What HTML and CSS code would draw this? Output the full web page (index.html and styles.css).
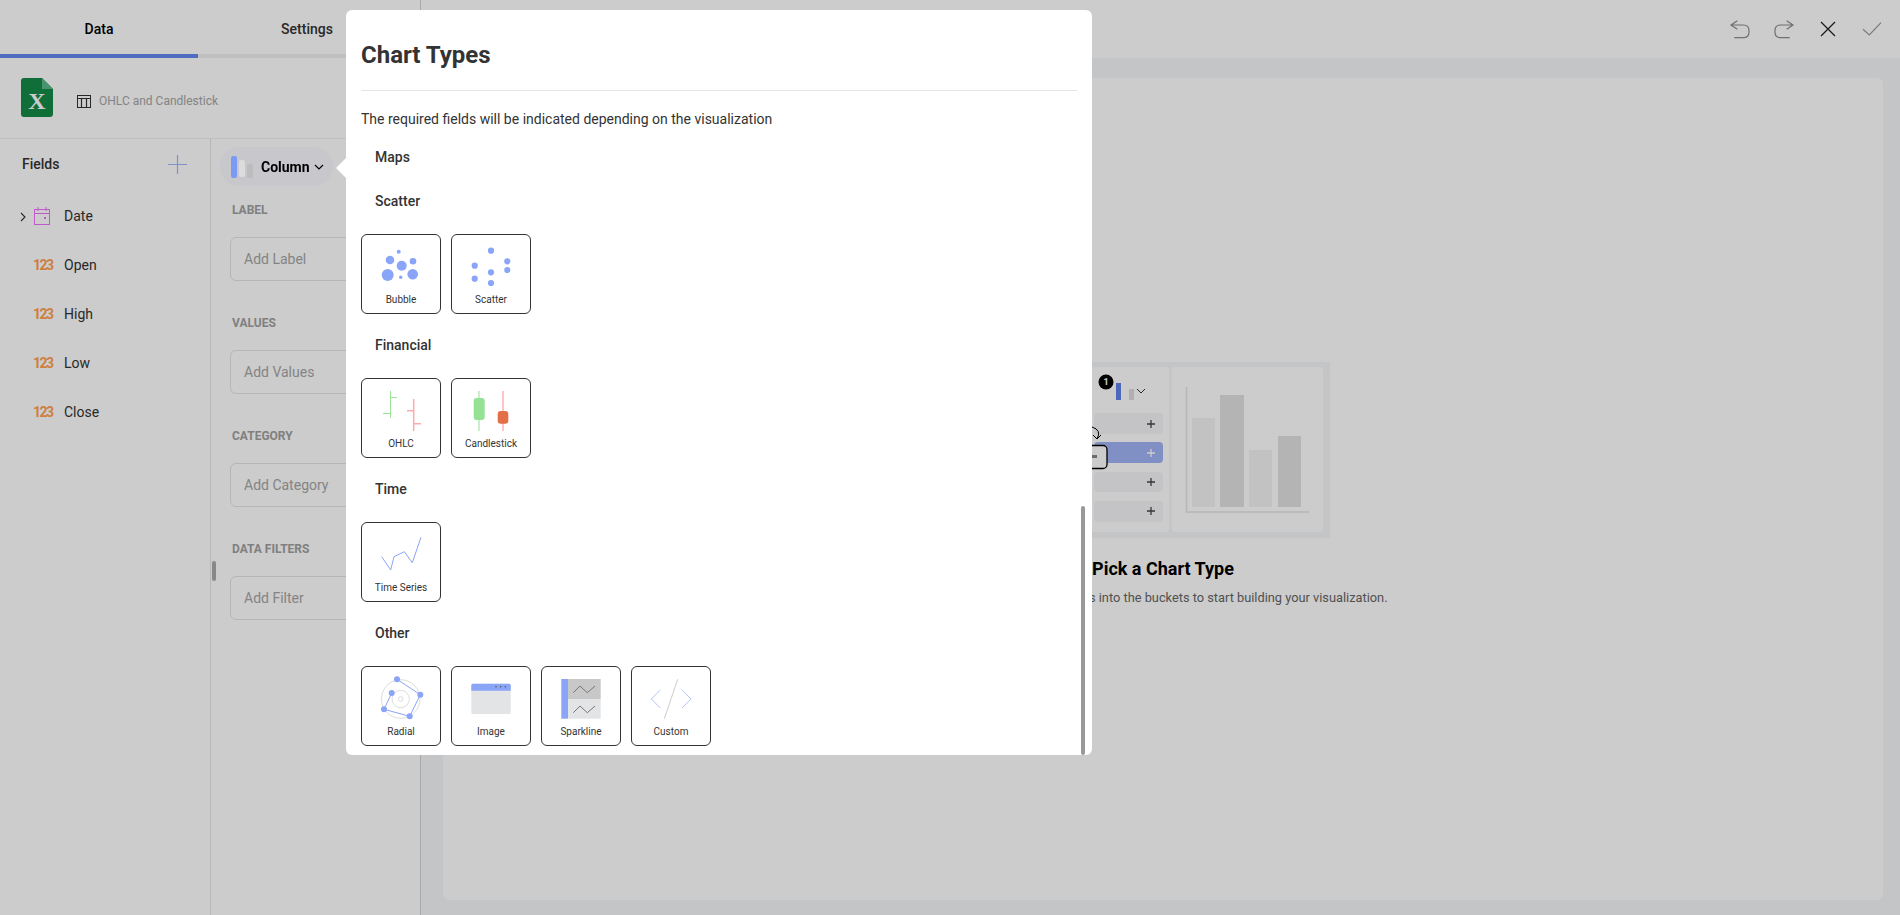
FILE: index.html
```html
<!DOCTYPE html>
<html lang="en">
<head>
<meta charset="UTF-8">
<meta name="viewport" content="width=device-width, initial-scale=1.0">
<title>Chart Types</title>
<link rel="stylesheet" href="styles.css">
</head>
<body>

<div class="app">
    <aside class="side">
        <div class="tabs">
            <div class="tab tab-active">Data</div>
            <div class="tab tab-settings">Settings</div>
        </div>

        <div class="source">
            <svg class="excel" width="32" height="39" viewBox="0 0 32 39">
                <path d="M3 0H21L32 11V36a3 3 0 0 1-3 3H3a3 3 0 0 1-3-3V3a3 3 0 0 1 3-3z" fill="#148a47"/>
                <path d="M21 0L32 11H21z" fill="#5cb98a"/>
                <text x="16" y="31" text-anchor="middle" class="excel-x">X</text>
            </svg>
            <svg class="table-icon" width="14" height="14" viewBox="0 0 14 14" fill="none" stroke="#333" stroke-width="1">
                <rect x="0.5" y="1.5" width="13" height="12"/>
                <path d="M0.5 4.5H13.5M4.5 4.5V13.5M9.5 4.5V13.5M0 1.5H14" stroke-width="1.2"/>
            </svg>
            <span class="source-name">OHLC and Candlestick</span>
        </div>

        <div class="side-body">
            <div class="fields">
                <div class="fields-head">
                    <span>Fields</span>
                    <svg width="19" height="19" viewBox="0 0 19 19" stroke="#a0b8fa" stroke-width="1.2"><path d="M9.5 0V19M0 9.5H19"/></svg>
                </div>
                <div class="field">
                    <svg class="caret" width="6" height="10" viewBox="0 0 6 10" fill="none" stroke="#333" stroke-width="1.1"><path d="M1 1L5 5L1 9"/></svg>
                    <svg class="type" width="16" height="18" viewBox="0 0 16 18" fill="none" stroke="#f070ff" stroke-width="1"><rect x="0.5" y="2.5" width="15" height="15"/><path d="M0.5 6.5H15.5M4 0V4M12 0V4"/><rect x="10" y="10" width="2" height="2" fill="#f070ff" stroke="none"/></svg>
                    <span>Date</span>
                </div>
                <div class="field"><span class="num">123</span><span>Open</span></div>
                <div class="field"><span class="num">123</span><span>High</span></div>
                <div class="field"><span class="num">123</span><span>Low</span></div>
                <div class="field"><span class="num">123</span><span>Close</span></div>
            </div>

            <div class="buckets">
                <div class="viz-chip">
                    <span class="viz-bar bar-a"></span><span class="viz-bar bar-b"></span><span class="viz-bar bar-c"></span>
                    <span class="viz-name">Column</span>
                    <svg class="viz-caret" width="10" height="6" viewBox="0 0 10 6" fill="none" stroke="#000" stroke-width="1.2"><path d="M1 1L5 5L9 1"/></svg>
                </div>
                <div class="bucket">
                    <div class="bucket-label">LABEL</div>
                    <div class="bucket-box">Add Label</div>
                </div>
                <div class="bucket">
                    <div class="bucket-label">VALUES</div>
                    <div class="bucket-box">Add Values</div>
                </div>
                <div class="bucket">
                    <div class="bucket-label">CATEGORY</div>
                    <div class="bucket-box">Add Category</div>
                </div>
                <div class="bucket">
                    <div class="bucket-label">DATA FILTERS</div>
                    <div class="bucket-box">Add Filter</div>
                </div>
            </div>
            <div class="resizer"></div>
        </div>
    </aside>

    <main class="main">
        <div class="topbar">
            <button class="top-btn"><svg width="24" height="24" viewBox="0 0 24 24" fill="none" stroke="#8c8c8c" stroke-width="1.2"><path d="M9.3 3.7L3 8L9.3 12.3M3 8H15.3Q21 8 21 13.5V15Q21 20.7 15.3 20.7H6.3"/></svg></button>
            <button class="top-btn"><svg width="24" height="24" viewBox="0 0 24 24" fill="none" stroke="#8c8c8c" stroke-width="1.2"><path d="M14.7 3.7L21 8L14.7 12.3M21 8H8.7Q3 8 3 13.5V15Q3 20.7 8.7 20.7H17.7"/></svg></button>
            <button class="top-btn"><svg width="24" height="24" viewBox="0 0 24 24" fill="none" stroke="#222" stroke-width="1.3"><path d="M5 5L19 19M19 5L5 19"/></svg></button>
            <button class="top-btn"><svg width="24" height="24" viewBox="0 0 24 24" fill="none" stroke="#999" stroke-width="1.2"><path d="M3 12.3L9.3 18L21 5.7"/></svg></button>
        </div>

        <div class="stage">
            <div class="stage-card">
                <svg class="hint-art" width="334" height="176" viewBox="0 0 334 176">
                    <rect width="334" height="176" fill="#f6f7f9"/>
                    <rect x="4" y="5" width="169" height="165" rx="3" fill="#fff"/>
                    <rect x="176" y="5" width="151" height="165" rx="3" fill="#fff"/>
                    <circle cx="110" cy="20" r="7.5" fill="#000"/>
                    <text x="110" y="23" text-anchor="middle" class="badge-num">1</text>
                    <rect x="120" y="21" width="5" height="17" fill="#5f82ea"/>
                    <rect x="126" y="21" width="5" height="17" fill="#fff"/>
                    <rect x="133" y="27" width="5" height="11" fill="#ddd"/>
                    <path d="M141 27L145 31L149 27" fill="none" stroke="#333"/>
                    <rect x="98" y="51" width="69" height="21" rx="4" fill="#f6f6f8"/>
                    <rect x="98" y="80" width="69" height="21" rx="4" fill="#a1b5f5"/>
                    <rect x="98" y="110" width="69" height="20" rx="4" fill="#f6f6f8"/>
                    <rect x="98" y="139" width="69" height="21" rx="4" fill="#f6f6f8"/>
                    <path d="M155 58V66M151 62H159M155 116V124M151 120H159M155 145V153M151 149H159" stroke="#444" stroke-width="1.3"/>
                    <path d="M155 87V95M151 91H159" stroke="#fff" stroke-width="1.3"/>
                    <path d="M96 65Q106 68 101 77M97 73L101 77L105 73" fill="none" stroke="#000" stroke-width="1"/>
                    <rect x="60" y="83.5" width="51" height="23" rx="4" fill="#fff" stroke="#000" stroke-width="1.3"/>
                    <rect x="96" y="93" width="5" height="3" fill="#888"/>
                    <path d="M190.5 25V150H313" fill="none" stroke="#e4e4e4" stroke-width="1.5"/>
                    <rect x="196" y="56" width="23" height="89" fill="#f3f3f4"/>
                    <rect x="224" y="33" width="24" height="112" fill="#e2e2e2"/>
                    <rect x="253" y="88" width="23" height="57" fill="#f3f3f4"/>
                    <rect x="282" y="74" width="23" height="71" fill="#e2e2e2"/>
                </svg>
                <h3 class="hint-title">Pick a Chart Type</h3>
                <p class="hint-text">Drag &amp; drop your data fields into the buckets to start building your visualization.</p>
            </div>
        </div>
    </main>
</div>

<div class="scrim"></div>

<div class="modal">
    <span class="modal-arrow"></span>
    <h2 class="modal-title">Chart Types</h2>
    <p class="modal-desc">The required fields will be indicated depending on the visualization</p>

    <div class="group-title">Maps</div>

    <div class="group-title">Scatter</div>
    <div class="tiles">
        <div class="tile">
            <svg class="tile-art" viewBox="1 1 78 56" fill="#8aa5f8">
                <circle cx="37.7" cy="17.7" r="2"/><circle cx="29" cy="26" r="4.3"/><circle cx="40.7" cy="31.7" r="5"/><circle cx="52" cy="27.3" r="3.3"/><circle cx="26.7" cy="41" r="6"/><circle cx="39.7" cy="43.3" r="1.7"/><circle cx="51.7" cy="40.3" r="5.3"/>
            </svg>
            <span class="tile-name">Bubble</span>
        </div>
        <div class="tile">
            <svg class="tile-art" viewBox="1 1 78 56" fill="#8aa5f8">
                <circle cx="40" cy="16.7" r="3.1"/><circle cx="23.7" cy="31.7" r="3.1"/><circle cx="23.7" cy="44.7" r="3.1"/><circle cx="40" cy="38.3" r="3.1"/><circle cx="40" cy="49" r="3.1"/><circle cx="56.3" cy="27.3" r="3.1"/><circle cx="56.3" cy="36" r="3.1"/>
            </svg>
            <span class="tile-name">Scatter</span>
        </div>
    </div>

    <div class="group-title">Financial</div>
    <div class="tiles">
        <div class="tile">
            <svg class="tile-art" viewBox="1 1 78 56" fill="none">
                <path d="M29.5 13V40M29.5 19.5H36M22 35.5H29.5" stroke="#9be39b"/>
                <path d="M52.7 21V53M46 32.7H52.7M52.7 45.7H60" stroke="#ffaaaa" stroke-width="1.5"/>
            </svg>
            <span class="tile-name">OHLC</span>
        </div>
        <div class="tile">
            <svg class="tile-art" viewBox="1 1 78 56">
                <path d="M28 13V53" stroke="#95e295"/>
                <rect x="22.7" y="20" width="11" height="22" rx="3" fill="#95e295"/>
                <path d="M52 13V53" stroke="#ffb0b0" stroke-width="1.5"/>
                <rect x="46.7" y="33" width="10.6" height="12.7" rx="3" fill="#e26f45"/>
            </svg>
            <span class="tile-name">Candlestick</span>
        </div>
    </div>

    <div class="group-title">Time</div>
    <div class="tiles">
        <div class="tile">
            <svg class="tile-art" viewBox="1 1 78 56" fill="none">
                <path d="M20.7 34.7L29.7 48L33 34.7L43.3 29.7L51.3 40.7L60 15.3" stroke="#8aa5f8"/>
            </svg>
            <span class="tile-name">Time Series</span>
        </div>
    </div>

    <div class="group-title">Other</div>
    <div class="tiles">
        <div class="tile">
            <svg class="tile-art" viewBox="1 1 78 56" fill="none">
                <circle cx="39.7" cy="33" r="19.3" stroke="#ddd"/>
                <circle cx="39.7" cy="33" r="8.7" stroke="#ddd"/>
                <circle cx="39.7" cy="33" r="2.3" stroke="#ddd"/>
                <path d="M36 13.3L59.3 28.7L48.7 50.3L23 43.3L30.7 27" stroke="#8aa5f8"/>
                <g fill="#8aa5f8">
                    <circle cx="36" cy="13.3" r="3"/><circle cx="30.7" cy="27" r="3"/><circle cx="59.3" cy="28.7" r="3"/><circle cx="23" cy="43.3" r="3"/><circle cx="48.7" cy="50.3" r="3"/>
                </g>
            </svg>
            <span class="tile-name">Radial</span>
        </div>
        <div class="tile">
            <svg class="tile-art" viewBox="1 1 78 56">
                <rect x="20.3" y="17.7" width="39.4" height="30.3" rx="1.5" fill="#e3e4e6"/>
                <path d="M20.3 24.7V19.2a1.5 1.5 0 0 1 1.5-1.5H58.2a1.5 1.5 0 0 1 1.5 1.5V24.7z" fill="#8aa5f8"/>
                <circle cx="45" cy="20.7" r="0.8" fill="#555"/><circle cx="49.7" cy="20.7" r="0.8" fill="#555"/><circle cx="54.3" cy="20.7" r="0.8" fill="#555"/>
            </svg>
            <span class="tile-name">Image</span>
        </div>
        <div class="tile">
            <svg class="tile-art" viewBox="1 1 78 56" fill="none">
                <rect x="27" y="13" width="32.7" height="20" fill="#c8c8c8"/>
                <rect x="27" y="33" width="32.7" height="19.7" fill="#e3e4e6"/>
                <rect x="20.3" y="13" width="6.7" height="39.7" fill="#8aa5f8"/>
                <path d="M32.3 26.7L39 20L46.3 26.7L54 20M32.3 46.7L39 40L46.3 46.7L54 40" stroke="#777"/>
            </svg>
            <span class="tile-name">Sparkline</span>
        </div>
        <div class="tile">
            <svg class="tile-art" viewBox="1 1 78 56" fill="none">
                <path d="M29.3 24L20.3 33L29.3 42M51 24L60 33L51 42" stroke="#b4c5fa"/>
                <path d="M46.7 13.3L33.3 52.7" stroke="#ccc"/>
            </svg>
            <span class="tile-name">Custom</span>
        </div>
    </div>

    <div class="modal-scroll"></div>
</div>

</body>
</html>
```

FILE: styles.css
```css
* {
    box-sizing: border-box;
}

body {
    margin: 0;
    height: 100vh;
    overflow: hidden;
    background-color: #fff;
    font-family: Roboto, "Liberation Sans", sans-serif;
    font-size: 14px;
    color: #333;
}

.app {
    display: flex;
    height: 100vh;
}

/* left panel */
.side {
    width: 421px;
    flex-shrink: 0;
    display: flex;
    flex-direction: column;
    border-right: 1px solid #d4d4d4;
}

.tabs {
    display: flex;
    height: 58px;
}

.tab {
    display: flex;
    align-items: center;
    justify-content: center;
    padding-top: 4px;
    border-bottom: 4px solid #f0f0f0;
    font-weight: 500;
}

.tab-active {
    width: 198px;
    color: #000;
    border-bottom-color: #6487f0;
}

.tab-settings {
    flex: 1;
    padding-right: 4px;
}

.source {
    height: 81px;
    flex-shrink: 0;
    display: flex;
    align-items: center;
    padding-left: 21px;
    padding-bottom: 2px;
    border-bottom: 1px solid #f0f0f0;
}

.excel {
    margin-right: 24px;
}

.excel-x {
    font-family: "Liberation Serif", serif;
    font-size: 24px;
    font-weight: bold;
    fill: #fff;
}

.table-icon {
    margin: 8px 8px 0 0;
}

.source-name {
    margin-top: 8px;
    font-size: 12px;
    color: #a6a6a6;
}

.side-body {
    flex: 1;
    display: flex;
    position: relative;
}

.fields {
    width: 211px;
    flex-shrink: 0;
    border-right: 1px solid #e4e4e4;
}

.fields-head {
    height: 50px;
    margin-bottom: 2px;
    display: flex;
    align-items: center;
    justify-content: space-between;
    padding: 0 23px 0 22px;
    font-weight: 500;
}

.field {
    height: 49px;
    display: flex;
    align-items: center;
    padding-left: 33px;
}

.field .caret {
    margin-left: -13px;
    margin-right: 7px;
    margin-top: 2px;
}

.field .type {
    margin: 0 14px 0 1px;
}

.num {
    width: 31px;
    font-weight: 700;
    letter-spacing: -1.5px;
    color: #ffa050;
}

.buckets {
    flex: 1;
    padding-left: 19px;
}

.viz-chip {
    width: 113px;
    height: 39px;
    margin: 8px 0 16px -10px;
    padding-left: 11px;
    display: flex;
    align-items: center;
    border-radius: 20px;
    background-color: #f9f9ff;
}

/* the picked type stays bright above the scrim */
.viz-bar,
.viz-name,
.viz-caret {
    position: relative;
    z-index: 1;
}

.viz-bar {
    width: 6px;
    margin-right: 2px;
    border-radius: 2px;
}

.bar-a {
    height: 22px;
    background-color: #7a9af5;
}

.bar-b {
    height: 17px;
    margin-top: 4px;
    background-color: #dcdcdc;
}

.bar-c {
    height: 14px;
    margin-top: 8px;
    background-color: #bcbcbc;
}

.viz-name {
    margin: 0 4px 0 6px;
    font-weight: 700;
    color: #000;
}

.bucket {
    margin-bottom: 34px;
}

.bucket-label {
    height: 16px;
    line-height: 16px;
    margin-bottom: 19px;
    padding-left: 2px;
    font-size: 12px;
    font-weight: 700;
    color: #a0a0a0;
}

.bucket-box {
    height: 44px;
    display: flex;
    align-items: center;
    padding-left: 13px;
    border: 1px solid #e4e4e4;
    border-radius: 6px;
    color: #a6a6a6;
}

.resizer {
    position: absolute;
    left: 212px;
    top: 422px;
    width: 4px;
    height: 20px;
    border-radius: 2px;
    background-color: #aaa;
}

/* right side */
.main {
    flex: 1;
    display: flex;
    flex-direction: column;
}

.topbar {
    height: 58px;
    flex-shrink: 0;
    display: flex;
    justify-content: flex-end;
    align-items: center;
    padding-right: 6px;
}

.top-btn {
    width: 44px;
    height: 44px;
    padding: 0;
    border: none;
    background: none;
    display: flex;
    align-items: center;
    justify-content: center;
}

.stage {
    flex: 1;
    display: flex;
    padding: 20px 17px 15px 22px;
    background-color: #f6f7f9;
}

.stage-card {
    flex: 1;
    display: flex;
    flex-direction: column;
    align-items: center;
    justify-content: center;
    padding-bottom: 9px;
    border-radius: 6px;
    background-color: #fff;
}

.badge-num {
    font-size: 9px;
    font-weight: 700;
    fill: #fff;
}

.hint-title {
    margin: 19px 0 0;
    font-size: 18px;
    line-height: 24px;
    font-weight: 700;
    color: #000;
}

.hint-text {
    margin: 8px 0 0;
    font-size: 12.8px;
    line-height: 18px;
    color: #666;
}

/* overlay */
.scrim {
    position: fixed;
    top: 0;
    left: 0;
    width: 100%;
    height: 100%;
    background-color: rgba(0, 0, 0, 0.2);
}

.modal {
    position: fixed;
    left: 346px;
    top: 10px;
    width: 746px;
    height: 745px;
    padding: 0 15px;
    border-radius: 6px;
    background-color: #fff;
}

.modal-arrow {
    position: absolute;
    left: -7px;
    top: 151px;
    width: 14px;
    height: 14px;
    transform: rotate(45deg);
    background-color: #fff;
}

.modal-title {
    height: 81px;
    margin: 0;
    padding-top: 9px;
    display: flex;
    align-items: center;
    border-bottom: 1px solid #e4e4e4;
    font-size: 24px;
    font-weight: 700;
    color: #333;
}

.modal-desc {
    margin: 18px 0 6px;
    line-height: 20px;
}

.group-title {
    height: 44px;
    display: flex;
    align-items: center;
    padding-left: 14px;
    font-weight: 500;
}

.tiles {
    display: flex;
    gap: 10px;
    margin: 11px 0 9px;
}

.tile {
    width: 80px;
    height: 80px;
    display: flex;
    flex-direction: column;
    align-items: center;
    border: 1px solid #333;
    border-radius: 6px;
}

.tile-art {
    width: 78px;
    height: 56px;
}

.tile-name {
    margin-top: 3px;
    font-size: 10px;
    line-height: 12px;
}

.modal-scroll {
    position: absolute;
    left: 735px;
    top: 496px;
    width: 4px;
    height: 249px;
    border-radius: 2px;
    background-color: #999;
}
```
